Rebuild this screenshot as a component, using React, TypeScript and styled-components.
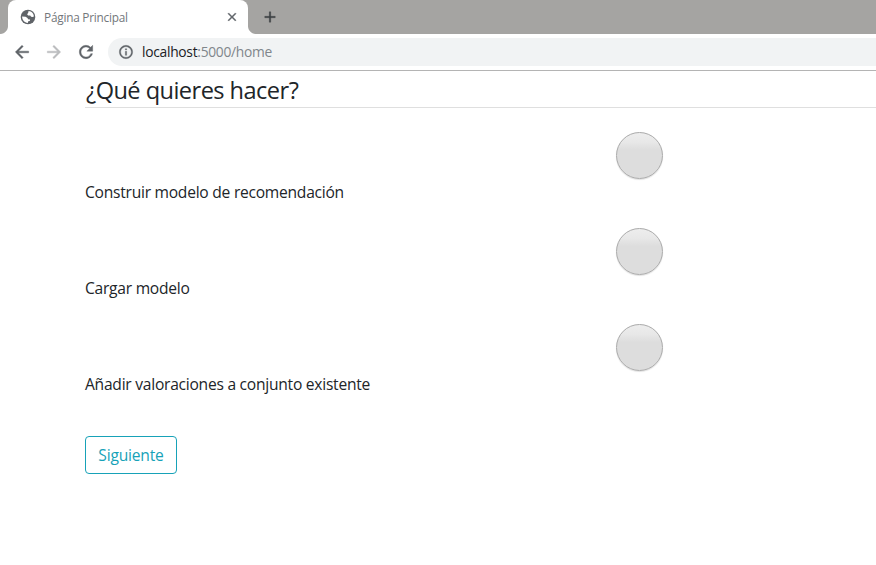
import React from "react";
import styled, { createGlobalStyle } from "styled-components";
import { MdArrowBack, MdArrowForward, MdRefresh, MdInfoOutline, MdClose, MdAdd } from "react-icons/md";

const GlobalStyle = createGlobalStyle`
  *, *::before, *::after { box-sizing: border-box; }
  body {
    margin: 0;
    overflow: hidden;
    background: #fff;
    color: #212529;
    font-family: "Open Sans", "Noto Sans", sans-serif;
  }
  svg path[fill="none"] { stroke: none; }
`;

const Browser = styled.div`
  height: 565px;
  overflow: hidden;
`;

const TabStrip = styled.div`
  display: flex;
  height: 34px;
  padding-left: 8px;
  background: #a5a4a2;
`;

const Tab = styled.div`
  position: relative;
  display: flex;
  align-items: center;
  width: 240px;
  padding: 0 9px 0 12px;
  border-radius: 8px 8px 0 0;
  background: #fff;
  color: #5f6368;

  &::before, &::after {
    content: "";
    position: absolute;
    bottom: 0;
    width: 8px;
    height: 8px;
  }
  &::before {
    left: -8px;
    background: radial-gradient(circle at 0 0, transparent 7.5px, #fff 8.5px);
  }
  &::after {
    right: -8px;
    background: radial-gradient(circle at 100% 0, transparent 7.5px, #fff 8.5px);
  }
`;

const TabTitle = styled.span`
  flex: 1;
  margin-left: 8px;
  font-size: 11.8px;
  letter-spacing: -0.22px;
  line-height: 16px;
  white-space: nowrap;
  color: #73777b;
`;

const CloseIcon = styled(MdClose)`
  stroke-width: 0.7;
`;

const NewTab = styled.div`
  display: flex;
  align-items: center;
  margin-left: 13px;
  color: #3c4043;

  svg { stroke-width: 0.4; }
`;

const Toolbar = styled.div`
  display: flex;
  align-items: center;
  height: 37px;
  padding-left: 12px;
  border-bottom: 1px solid #b4b4b4;
`;

const NavButton = styled.div<{ $disabled?: boolean }>`
  display: flex;
  width: 32px;
  color: ${(p) => (p.$disabled ? "#babcbe" : "#5f6368")};

  svg { stroke-width: 0.5; }
`;

const AddressBar = styled.div`
  display: flex;
  align-items: center;
  flex: 1;
  height: 28px;
  padding-left: 10px;
  border-radius: 14px 0 0 14px;
  background: #f1f3f4;
  color: #5f6368;

  svg { stroke-width: 0.5; }
`;

const Url = styled.span`
  margin-left: 8px;
  font-size: 13.8px;
  letter-spacing: -0.28px;
  line-height: 20px;
  color: #80868b;
`;

const Host = styled.span`
  color: #202124;
`;

const Page = styled.main`
  padding-left: 85px;
`;

const Heading = styled.h1`
  height: 37px;
  margin: 0;
  padding: 3px 0 0 1px;
  border-bottom: 1px solid #dfdfdf;
  font-size: 23.6px;
  font-weight: 400;
  letter-spacing: -0.55px;
  line-height: 32px;
  white-space: nowrap;
`;

const Options = styled.div`
  display: flex;
  flex-direction: column;
  gap: 24px;
  padding-top: 24px;
`;

const Option = styled.label`
  display: flex;
  flex-direction: column;
  height: 72px;
`;

const Radio = styled.span`
  flex-shrink: 0;
  width: 47px;
  height: 47px;
  margin: 0 0 1px 531px;
  border: 1px solid #aaaaaa;
  border-radius: 50%;
  background: linear-gradient(#ededed, #e8e8e8 20%, #dddddd 38%, #dddddd);
  box-shadow: 0 1px 1px rgba(0, 0, 0, 0.12);
`;

const OptionText = styled.span`
  font-size: 15.6px;
  letter-spacing: -0.25px;
  line-height: 24px;
  white-space: nowrap;
`;

const NextButton = styled.button`
  display: flex;
  align-items: center;
  justify-content: center;
  width: 92px;
  height: 38px;
  margin-top: 40px;
  padding: 0;
  border: 1px solid #17a2b8;
  border-radius: 4px;
  background: #fff;
  color: #17a2b8;
  font-family: inherit;
  font-size: 15.6px;
  letter-spacing: -0.2px;
  line-height: 24px;
`;

const Globe = () => (
  <svg width="16" height="16" viewBox="0 0 16 16">
    <circle cx="8" cy="8" r="7.3" fill="#5f6368" />
    <path
      d="M8.6 2.1 C11.5 2.2 13.9 4.8 13.9 7.5 L12.6 8.1 L11.1 7.8 L10.2 6.5 L8.1 6.4 L7.1 5.2 L8.1 3.9 Z M2.1 7.6 L5.6 7.7 L7.5 9 L8.1 10.2 L10.1 10.4 L9.8 12 L8.2 12.3 L7.8 13.9 C4.6 13.8 2.1 11.1 2.1 7.6 Z"
      fill="#fff"
    />
  </svg>
);

const options = [
  "Construir modelo de recomendación",
  "Cargar modelo",
  "Añadir valoraciones a conjunto existente",
];

export default function App() {
  return (
    <Browser>
      <GlobalStyle />
      <TabStrip>
        <Tab>
          <Globe />
          <TabTitle>Página Principal</TabTitle>
          <CloseIcon size={14} />
        </Tab>
        <NewTab>
          <MdAdd size={18} />
        </NewTab>
      </TabStrip>
      <Toolbar>
        <NavButton><MdArrowBack size={20} /></NavButton>
        <NavButton $disabled><MdArrowForward size={20} /></NavButton>
        <NavButton><MdRefresh size={20} /></NavButton>
        <AddressBar>
          <MdInfoOutline size={16} />
          <Url><Host>localhost</Host>:5000/home</Url>
        </AddressBar>
      </Toolbar>
      <Page>
        <Heading>¿Qué quieres hacer?</Heading>
        <Options>
          {options.map((text) => (
            <Option key={text}>
              <Radio />
              <OptionText>{text}</OptionText>
            </Option>
          ))}
        </Options>
        <NextButton>Siguiente</NextButton>
      </Page>
    </Browser>
  );
}
